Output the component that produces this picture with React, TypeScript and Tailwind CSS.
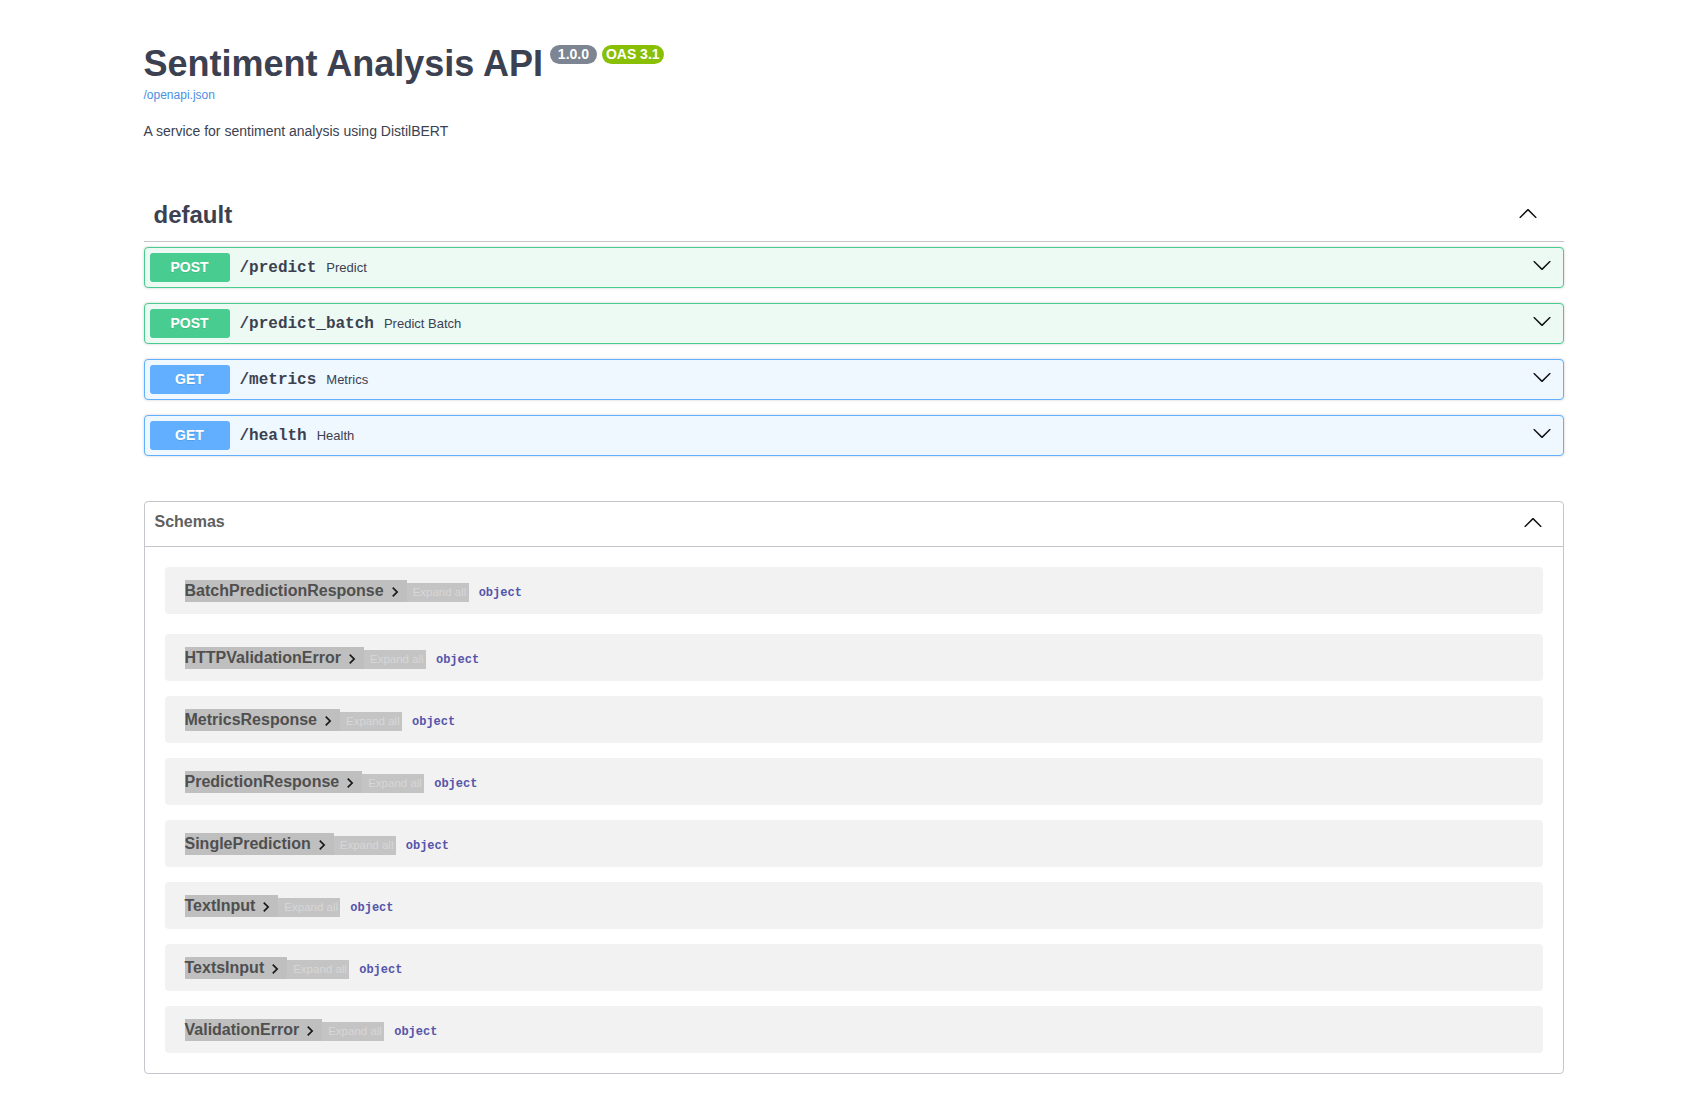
import React from "react";

const ArrowUp = ({ className }: { className?: string }) => (
  <svg width="20" height="20" viewBox="0 0 20 20" className={className} aria-hidden="true">
    <path
      fill="currentColor"
      d="M17.418 14.908c.272.268.709.268.979 0s.27-.701 0-.969l-7.908-7.83c-.27-.268-.707-.268-.979 0l-7.908 7.83c-.27.268-.27.701 0 .969.271.268.709.268.979 0L10 7.767l7.418 7.141z"
    />
  </svg>
);

const ArrowDown = ({ className }: { className?: string }) => (
  <svg width="20" height="20" viewBox="0 0 20 20" className={className} aria-hidden="true">
    <path
      fill="currentColor"
      d="M17.418 6.109c.272-.268.709-.268.979 0s.271.701 0 .969l-7.908 7.83c-.27.268-.707.268-.979 0l-7.908-7.83c-.27-.268-.27-.701 0-.969.271-.268.709-.268.979 0L10 13.25l7.418-7.141z"
    />
  </svg>
);

const ChevronRight = ({ className }: { className?: string }) => (
  <svg width="20" height="20" viewBox="0 0 24 24" className={className} aria-hidden="true">
    <path fill="currentColor" d="M10 6L8.59 7.41 13.17 12l-4.58 4.59L10 18l6-6z" />
  </svg>
);

type Op = { method: "POST" | "GET"; path: string; desc: string };

const ops: Op[] = [
  { method: "POST", path: "/predict", desc: "Predict" },
  { method: "POST", path: "/predict_batch", desc: "Predict Batch" },
  { method: "GET", path: "/metrics", desc: "Metrics" },
  { method: "GET", path: "/health", desc: "Health" },
];

const schemas = [
  "BatchPredictionResponse",
  "HTTPValidationError",
  "MetricsResponse",
  "PredictionResponse",
  "SinglePrediction",
  "TextInput",
  "TextsInput",
  "ValidationError",
];

function OpBlock({ op }: { op: Op }) {
  const post = op.method === "POST";
  return (
    <div
      className={
        post
          ? "mb-[15px] rounded-[4px] border border-[#49cc90] bg-[#edfaf4] shadow-[0_0_3px_rgba(0,0,0,0.19)]"
          : "mb-[15px] rounded-[4px] border border-[#61affe] bg-[#eff7ff] shadow-[0_0_3px_rgba(0,0,0,0.19)]"
      }
    >
      <div className="flex items-center p-[5px]">
        <span
          className={
            post
              ? "flex h-[29px] min-w-[80px] items-center justify-center rounded-[3px] bg-[#49cc90] text-[14px] font-bold text-white [text-shadow:0_1px_0_rgba(0,0,0,0.1)]"
              : "flex h-[29px] min-w-[80px] items-center justify-center rounded-[3px] bg-[#61affe] text-[14px] font-bold text-white [text-shadow:0_1px_0_rgba(0,0,0,0.1)]"
          }
        >
          {op.method}
        </span>
        <span className="px-[10px] font-['Liberation_Mono',monospace] text-[16px] font-bold leading-[18px] text-[#3b4151]">
          {op.path}
        </span>
        <span className="flex-1 text-[13px] leading-[16px] text-[#3b4151]">{op.desc}</span>
        <ArrowDown className="mb-[6px] mr-[6px] text-[#111]" />
      </div>
    </div>
  );
}

function SchemaRow({ name, first }: { name: string; first: boolean }) {
  return (
    <div
      className={
        first
          ? "m-5 flex h-[47px] items-center rounded-[4px] bg-[#f2f2f2] pl-5"
          : "mx-5 mb-[15px] flex h-[47px] items-center rounded-[4px] bg-[#f2f2f2] pl-5"
      }
    >
      <div className="flex items-end">
        <span className="flex h-[22px] items-center bg-[#bfbfbf] text-[16px] font-bold leading-[18px] text-[#4f4f4f]">
          {name}
          <ChevronRight className="ml-[1px] mr-[2px] mt-[2px] text-[#1a1a1a]" />
        </span>
        <span className="h-[19px] w-[62px] overflow-hidden whitespace-nowrap bg-[#c4c4c4] pl-[6px] text-[11.5px] leading-[19px] text-[#d7d7d7]">
          Expand all
        </span>
        <span className="ml-[10px] h-[19px] font-['Liberation_Mono',monospace] text-[12px] font-bold leading-[20px] text-[#55a]">
          object
        </span>
      </div>
    </div>
  );
}

export default function App() {
  return (
    <div className="min-h-screen bg-white font-['Liberation_Sans',Arial,sans-serif] text-[#3b4151]">
      <div className="mx-auto w-full max-w-[1460px] px-5 pb-[30px]">
        {/* Info */}
        <div className="pt-[43px]">
          <div className="flex items-start">
            <h2 className="text-[36px] font-bold leading-[41px] text-[#3b4151]">Sentiment Analysis API</h2>
            <span className="ml-[7px] mt-[2px] whitespace-pre rounded-full bg-[#7d8492] px-[4px] py-[2px] text-[14px] font-bold leading-[15px] text-white">
              {" 1.0.0 "}
            </span>
            <span className="ml-[5px] mt-[2px] whitespace-pre rounded-full bg-[#89bf04] px-[4px] py-[2px] text-[14px] font-bold leading-[15px] text-white">
              {"OAS 3.1"}
            </span>
          </div>
          <a className="mt-[2px] block w-fit text-[12px] leading-[18px] text-[#4990e2]" href="#">
            /openapi.json
          </a>
          <p className="mt-[19px] text-[14px] leading-[16px] text-[#3b4151]">
            A service for sentiment analysis using DistilBERT
          </p>
        </div>

        {/* default tag */}
        <div className="mt-[50px]">
          <div className="mb-[5px] flex h-[53px] items-center border-b border-[#c4c6cb] pl-[10px] pr-[26px]">
            <h3 className="flex-1 text-[24px] font-bold leading-[28px] text-[#3b4151]">default</h3>
            <ArrowUp className="mb-[5px] text-[#111]" />
          </div>
          <div className="flex flex-col">
            {ops.map((op) => (
              <OpBlock key={op.path} op={op} />
            ))}
          </div>
        </div>

        {/* Schemas */}
        <section className="mt-[30px] rounded-[4px] border border-[#c4c6cb]">
          <div className="flex h-[45px] items-start border-b border-[#c4c6cb] pl-[10px] pr-5 pt-[11px]">
            <h4 className="flex-1 text-[16px] font-bold leading-[18px] text-[#606060]">Schemas</h4>
            <ArrowUp className="-mt-[1px] text-[#111]" />
          </div>
          <div className="pb-[5px]">
            {schemas.map((s, i) => (
              <SchemaRow key={s} name={s} first={i === 0} />
            ))}
          </div>
        </section>
      </div>
    </div>
  );
}
